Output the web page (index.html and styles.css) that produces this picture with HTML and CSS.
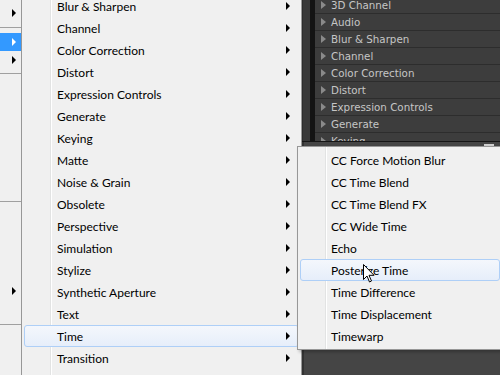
FILE: index.html
```html
<!DOCTYPE html>
<html lang="en">

<head>
  <title>Effects menu</title>
  <link rel="stylesheet" href="styles.css">
</head>

<body>
  <div class="screen">
    <div class="parent-menu">
      <div class="pm-item tall"><span class="arrow"></span></div>
      <div class="pm-sep first"></div>
      <div class="pm-item active"><span class="arrow"></span></div>
      <div class="pm-item"><span class="arrow"></span></div>
      <div class="pm-sep"></div>
      <div class="pm-blank"></div>
      <div class="pm-sep plain"></div>
      <div class="pm-blank short"></div>
      <div class="pm-item"><span class="arrow"></span></div>
      <div class="pm-blank tiny"></div>
      <div class="pm-sep plain"></div>
    </div>

    <div class="effects-menu">
      <div class="item"><span>Blur &amp; Sharpen</span><span class="arrow"></span></div>
      <div class="item"><span>Channel</span><span class="arrow"></span></div>
      <div class="item"><span>Color Correction</span><span class="arrow"></span></div>
      <div class="item"><span>Distort</span><span class="arrow"></span></div>
      <div class="item"><span>Expression Controls</span><span class="arrow"></span></div>
      <div class="item"><span>Generate</span><span class="arrow"></span></div>
      <div class="item"><span>Keying</span><span class="arrow"></span></div>
      <div class="item"><span>Matte</span><span class="arrow"></span></div>
      <div class="item"><span>Noise &amp; Grain</span><span class="arrow"></span></div>
      <div class="item"><span>Obsolete</span><span class="arrow"></span></div>
      <div class="item"><span>Perspective</span><span class="arrow"></span></div>
      <div class="item"><span>Simulation</span><span class="arrow"></span></div>
      <div class="item"><span>Stylize</span><span class="arrow"></span></div>
      <div class="item"><span>Synthetic Aperture</span><span class="arrow"></span></div>
      <div class="item"><span>Text</span><span class="arrow"></span></div>
      <div class="item hover"><span>Time</span><span class="arrow"></span></div>
      <div class="item"><span>Transition</span><span class="arrow"></span></div>
    </div>

    <div class="panel">
      <div class="panel-top">
        <div class="panel-strip"></div>
        <div class="panel-divider"></div>
        <ul class="tree">
          <li><span class="twisty"></span>3D Channel</li>
          <li><span class="twisty"></span>Audio</li>
          <li><span class="twisty"></span>Blur &amp; Sharpen</li>
          <li><span class="twisty"></span>Channel</li>
          <li><span class="twisty"></span>Color Correction</li>
          <li><span class="twisty"></span>Distort</li>
          <li><span class="twisty"></span>Expression Controls</li>
          <li><span class="twisty"></span>Generate</li>
          <li><span class="twisty"></span>Keying</li>
        </ul>
      </div>
      <div class="panel-bottom">
        <div class="scroll-thumb"></div>
      </div>
    </div>

    <div class="submenu">
      <div class="item">CC Force Motion Blur</div>
      <div class="item">CC Time Blend</div>
      <div class="item">CC Time Blend FX</div>
      <div class="item">CC Wide Time</div>
      <div class="item">Echo</div>
      <div class="item hover">Posterize Time</div>
      <div class="item">Time Difference</div>
      <div class="item">Time Displacement</div>
      <div class="item">Timewarp</div>
    </div>

    <svg class="cursor" width="13" height="20" viewBox="0 0 13 20">
      <path d="M0.5 0.5 L0.5 15.5 L4 12 L6.5 18 L8.5 17 L6 11.3 L11 11.3 Z" fill="#fff" stroke="#000" stroke-width="1" stroke-linejoin="round" />
    </svg>
  </div>
</body>

</html>
```

FILE: styles.css
```css
html {
  overflow: hidden;
}

body {
  margin: 0;
  padding: 0;
  overflow: hidden;
  background: #f0f0f0;
}

.screen {
  position: relative;
  display: flex;
  width: 500px;
  height: 375px;
  overflow: hidden;
  font-family: Lato, "Noto Sans", sans-serif;
  font-size: 12px;
  color: #000;
}

/* parent menu, mostly hidden at the left */
.parent-menu {
  width: 21px;
  flex-shrink: 0;
  display: flex;
  flex-direction: column;
  background: #f0f0f0;
}

.pm-item {
  height: 18px;
  display: flex;
  align-items: center;
  justify-content: flex-end;
  padding-right: 5px;
}

.pm-item.tall {
  height: 26px;
}

.pm-item.active {
  background: #3399ff;
}

.pm-item.active .arrow {
  border-left-color: #fff;
}

.pm-sep {
  height: 1px;
  background: #a0a0a0;
  margin: 4px 0 5px;
}

.pm-sep.first {
  margin: 1px 0 5px;
}

.pm-sep.plain {
  margin: 0;
}

.pm-blank {
  height: 122px;
}

.pm-blank.short {
  height: 80px;
}

.pm-blank.tiny {
  height: 24px;
}

.arrow {
  width: 0;
  height: 0;
  border-top: 4px solid transparent;
  border-bottom: 4px solid transparent;
  border-left: 4px solid #000;
}

/* effects menu */
.effects-menu {
  width: 281px;
  flex-shrink: 0;
  box-sizing: border-box;
  border-left: 1px solid #979797;
  border-right: 1px solid #979797;
  padding: 0 2px;
  background: #f0f0f0 linear-gradient(to right, transparent 28px, #e2e3e3 28px, #e2e3e3 29px, #fff 29px, #fff 30px, transparent 30px);
}

.effects-menu .item:first-child {
  margin-top: -5px;
}

.item {
  height: 22px;
  box-sizing: border-box;
  display: flex;
  align-items: center;
  justify-content: space-between;
  padding: 0 8px 0 32px;
  border: 1px solid transparent;
  border-radius: 3px;
  white-space: nowrap;
}

.item.hover {
  border-color: #aecff7;
  background: linear-gradient(#f4f7fc, #e6eefa);
}

/* effects & presets panel */
.panel {
  flex: 1;
  display: flex;
  flex-direction: column;
  background: #3a3a3a;
}

.panel-top {
  height: 141px;
  display: flex;
  overflow: hidden;
  border-bottom: 1px solid #151515;
}

.panel-strip {
  width: 7px;
  background: #383838;
  border-left: 1px solid #2c2c2c;
}

.panel-divider {
  width: 5px;
  background: #141414;
}

.tree {
  flex: 1;
  list-style: none;
  margin: -3px 0 0;
  padding: 0;
  font-family: "DejaVu Sans", sans-serif;
  font-size: 10.3px;
  color: #c6c6c6;
  background: #3d3d3d;
}

.tree li {
  height: 16px;
  display: flex;
  align-items: center;
  border-bottom: 1px solid #2d2d2d;
  white-space: nowrap;
}

.twisty {
  width: 0;
  height: 0;
  margin: 0 5px 0 6px;
  border-top: 4px solid transparent;
  border-bottom: 4px solid transparent;
  border-left: 5px solid #8a8a8a;
}

.panel-bottom {
  flex: 1;
  display: flex;
  justify-content: flex-end;
  background: #454545;
  border-left: 2px solid #333;
}

.scroll-thumb {
  width: 10px;
  height: 3px;
  margin: 2px 6px 0 0;
  background: #d0d0d0;
}

/* Time submenu */
.submenu {
  position: absolute;
  left: 297px;
  top: 146px;
  width: 206px;
  box-sizing: border-box;
  padding: 2px;
  border: 1px solid #979797;
  background: #f0f0f0 linear-gradient(to right, transparent 27px, #e2e3e3 27px, #e2e3e3 28px, #fff 28px, #fff 29px, transparent 29px);
  box-shadow: 2px 2px 3px rgba(0, 0, 0, 0.25);
}

.submenu .item {
  padding-left: 30px;
}

.cursor {
  position: absolute;
  left: 363px;
  top: 264px;
}
```
